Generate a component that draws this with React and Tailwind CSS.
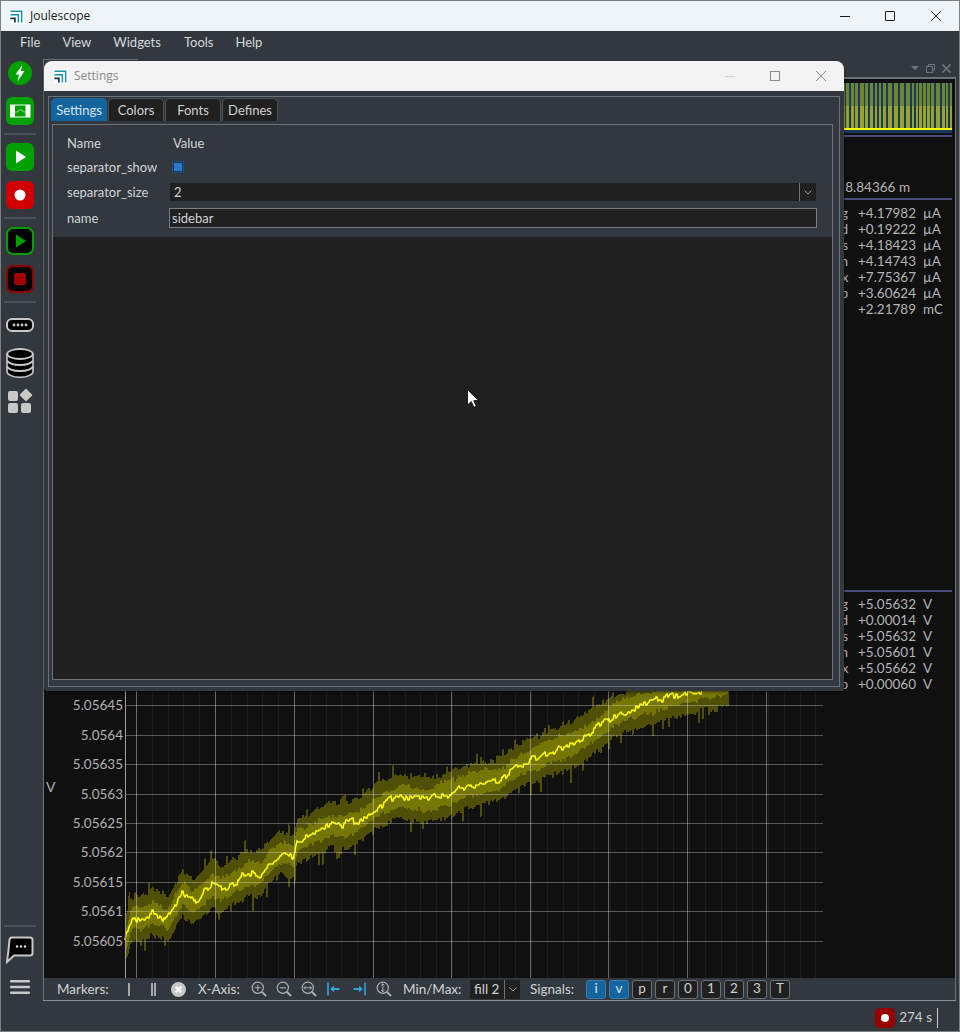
import React from "react";

function rng(seed) {
  let s = seed;
  return () => {
    s = (s * 1664525 + 1013904223) % 4294967296;
    return s / 4294967296;
  };
}

const MEAN = [[125,940],[127,935],[130,922],[135,917],[140,920],[152,912],[160,916],[167,920],[173,910],[182,893],[193,902],[200,895],[212,883],[220,889],[233,883],[248,873],[260,873],[270,862],[280,853],[293,857],[297,842],[310,835],[327,827],[345,825],[360,820],[375,808],[400,797],[430,800],[470,785],[500,780],[520,765],[545,755],[575,742],[595,730],[612,718],[640,705],[670,698],[700,690],[730,682]];

function meanAt(x) {
  for (let i = 1; i < MEAN.length; i++) {
    if (x <= MEAN[i][0]) {
      const [x0, y0] = MEAN[i - 1];
      const [x1, y1] = MEAN[i];
      return y0 + ((y1 - y0) * (x - x0)) / (x1 - x0);
    }
  }
  return 680;
}

function buildWave() {
  const r = rng(12345);
  const top = [], bot = [], itop = [], ibot = [], line = [];
  let nt = 0, nb = 0, it = 0, ib = 0, j = 0, slowT = 0, slowB = 0;
  for (let x = 125; x <= 728; x += 1) {
    const m = meanAt(x);
    if (x % 2 === 0) {
      j = j * 0.45 + (r() - 0.5) * 7;
      slowT = slowT * 0.85 + (r() - 0.5) * 2.5;
      slowB = slowB * 0.85 + (r() - 0.5) * 2.5;
      nt = r() * 5 + (r() < 0.14 ? r() * 11 : 0);
      nb = r() * 5 + (r() < 0.18 ? r() * 14 : 0);
      it = r() * 4 + slowT;
      ib = r() * 4 + slowB;
    }
    const y = m + j;
    top.push([x, Math.round(m - 20 - nt + slowT)]);
    bot.push([x, Math.round(m + 20 + nb + slowB)]);
    itop.push([x, Math.round(m - 9 - it)]);
    ibot.push([x, Math.round(m + 9 + ib)]);
    line.push([x, Math.round(y)]);
  }
  const step = (a) => a.map(([x, y]) => `${x},${y} ${x + 1},${y}`).join(" ");
  const stepR = (a) => [...a].reverse().map(([x, y]) => `${x + 1},${y} ${x},${y}`).join(" ");
  return {
    outer: step(top) + " " + stepR(bot),
    inner: step(itop) + " " + stepR(ibot),
    line: line.map(([x, y]) => `${x},${y}`).join(" "),
  };
}

const WAVE = buildWave();
const YLABELS = [
  ["5.05645", 705], ["5.0564", 735], ["5.05635", 764], ["5.0563", 794], ["5.05625", 823],
  ["5.0562", 852], ["5.05615", 882], ["5.0561", 911], ["5.05605", 941],
];
const VMAJOR = [136, 215, 294, 373, 451, 530, 608, 687, 766];

function Plot() {
  const minor = [];
  for (let x = 136; x < 824; x += 15.8) minor.push(Math.round(x));
  return (
    <svg viewBox="44 79 780 899" className="w-[780px] h-[899px] block shrink-0">
      <rect x="44" y="79" width="780" height="899" fill="#101010" />
      {minor.map((x) => (
        <line key={x} x1={x + 0.5} x2={x + 0.5} y1="79" y2="978" stroke="#1c1c1c" />
      ))}
      <polygon points={WAVE.outer} fill="#4f4f08" shapeRendering="crispEdges" />
      <polygon points={WAVE.inner} fill="#767604" shapeRendering="crispEdges" />
      <polyline points={WAVE.line} fill="none" stroke="#ffff00" strokeWidth="1.5" />
      {VMAJOR.map((x) => (
        <line key={x} x1={x + 0.5} x2={x + 0.5} y1="79" y2="978" stroke="#ffffff" strokeOpacity="0.36" />
      ))}
      {YLABELS.map(([t, y]) => (
        <line key={t} x1="125" x2="823" y1={y + 0.5} y2={y + 0.5} stroke="#ffffff" strokeOpacity="0.3" />
      ))}
      <line x1="125.5" x2="125.5" y1="79" y2="978" stroke="#a0a0a0" />
      {YLABELS.map(([t, y]) => (
        <text key={t} x="123" y={y + 5} textAnchor="end" fontSize="13.5" fill="#b0b0b0" fontFamily="Lato">{t}</text>
      ))}
      <text x="46" y="792" fontSize="14" fill="#b0b0b0" fontFamily="Lato">V</text>
    </svg>
  );
}

function Strip() {
  const r = rng(777);
  const bars = [];
  let x = 0;
  while (x < 128) {
    const w = 2 + Math.floor(r() * 3);
    bars.push([x, w]);
    x += w + 1 + Math.floor(r() * 2);
  }
  return (
    <svg viewBox="0 0 128 50" className="w-[128px] h-[50px] block">
      <rect width="128" height="50" fill="#17395f" />
      {bars.map(([bx, w]) => (
        <g key={bx}>
          <rect x={bx} y="0" width={w} height="23" fill="#6f8430" />
          <rect x={bx} y="23" width={w} height="22" fill="#99a22a" />
        </g>
      ))}
      <rect x="0" y="45" width="128" height="2" fill="#ffff00" />
    </svg>
  );
}

function Rows({ rows }) {
  return (
    <div className="flex flex-col">
      {rows.map(([l, v, u]) => (
        <div key={v + l} className="flex h-4 items-center leading-4">
          <span className="w-6 text-right">{l}</span>
          <span className="w-[65px] ml-[10px]">{v}</span>
          <span>{u}</span>
        </div>
      ))}
    </div>
  );
}

const Logo = ({ className }) => (
  <svg viewBox="0 0 16 16" className={className}>
    <rect width="16" height="16" rx="2" fill="#ffffff" />
    <path d="M1.5 2.5H13.5V14.5" fill="none" stroke="#1c8fb0" strokeWidth="1.6" />
    <path d="M1.5 6.2H10V14.5" fill="none" stroke="#1c8fb0" strokeWidth="1.6" />
    <path d="M1.5 10H6.3V14.5" fill="none" stroke="#12303f" strokeWidth="1.8" />
  </svg>
);

const SideSep = ({ className }) => <div className={`w-8 h-[2px] bg-[#4c5256] shrink-0 ${className}`} />;

const IconPlayBox = ({ dark, className }) => (
  <svg viewBox="0 0 28 28" className={`w-7 h-7 shrink-0 ${className}`}>
    <rect x={dark ? 1 : 0} y={dark ? 1 : 0} width={dark ? 26 : 28} height={dark ? 26 : 28} rx="6" fill={dark ? "#000000" : "#00a000"} stroke={dark ? "#00a000" : "none"} strokeWidth={dark ? 2 : 0} />
    <path d="M10 7.5L20 14L10 20.5Z" fill={dark ? "#00a000" : "#ffffff"} />
  </svg>
);

const IconRec = ({ className }) => (
  <svg viewBox="0 0 28 28" className={`w-7 h-7 shrink-0 ${className}`}>
    <rect width="28" height="28" rx="6" fill="#d00000" />
    <circle cx="14" cy="14" r="5.5" fill="#ffffff" />
  </svg>
);

const IconStop = ({ className }) => (
  <svg viewBox="0 0 28 28" className={`w-7 h-7 shrink-0 ${className}`}>
    <rect x="1" y="1" width="26" height="26" rx="6" fill="#000000" stroke="#900000" strokeWidth="2" />
    <rect x="8" y="8" width="12" height="12" rx="1.5" fill="#a00000" />
  </svg>
);

const IconMulti = ({ className }) => (
  <svg viewBox="0 0 28 28" className={`w-7 h-7 shrink-0 ${className}`}>
    <rect width="28" height="28" rx="6" fill="#00a000" />
    <rect x="4" y="7.5" width="5" height="13" fill="#ffffff" />
    <rect x="19.5" y="7.5" width="5" height="13" fill="#ffffff" />
    <path d="M9 8H19.5M9 20H19.5" stroke="#ffffff" strokeWidth="1" />
    <path d="M9 15H11.5L13 13H16L17.5 15H19.5" fill="none" stroke="#ffffff" strokeWidth="0.7" opacity="0.8" />
  </svg>
);

const IconDevice = ({ className }) => (
  <svg viewBox="0 0 28 14" className={`w-7 h-[14px] shrink-0 ${className}`}>
    <rect x="1" y="1" width="26" height="12" rx="5" fill="#000000" stroke="#c8c8c8" strokeWidth="2" />
    {[8, 12, 16, 20].map((x) => <circle key={x} cx={x} cy="7" r="1.4" fill="#c8c8c8" />)}
  </svg>
);

const IconDb = ({ className }) => (
  <svg viewBox="0 0 28 30" className={`w-7 h-[30px] shrink-0 ${className}`}>
    <path d="M1 6.5V23.5C1 26.8 7 29.3 14 29.3S27 26.8 27 23.5V6.5Z" fill="#000000" stroke="#c8c8c8" strokeWidth="1.6" />
    <ellipse cx="14" cy="6" rx="12.8" ry="5" fill="#000000" stroke="#c8c8c8" strokeWidth="1.8" />
    <path d="M1 12.5C3 16 8.5 17 14 17S25 16 27 12.5" fill="none" stroke="#c8c8c8" strokeWidth="2" />
    <path d="M1 18.5C3 22 8.5 23 14 23S25 22 27 18.5" fill="none" stroke="#c8c8c8" strokeWidth="2" />
  </svg>
);

const IconWidgets = ({ className }) => (
  <svg viewBox="0 0 26 26" className={`w-[26px] h-[26px] shrink-0 ${className}`}>
    <rect x="1" y="3" width="10" height="10" rx="2" fill="#c8c8c8" />
    <rect x="1" y="15" width="10" height="10" rx="2" fill="#c8c8c8" />
    <rect x="14" y="15" width="10" height="10" rx="2" fill="#c8c8c8" />
    <path d="M19 0.5L25 6.5a1 1 0 0 1 0 1.2L19 13.5L13 7.5a1 1 0 0 1 0-1.2Z" fill="#c8c8c8" />
  </svg>
);

const IconChat = ({ className }) => (
  <svg viewBox="0 0 28 28" className={`w-7 h-7 shrink-0 ${className}`}>
    <path d="M6 1.5H24A2.5 2.5 0 0 1 26.5 4V17A2.5 2.5 0 0 1 24 19.5H8L1 26Q2.5 15 3.5 4A2.5 2.5 0 0 1 6 1.5Z" fill="#000000" stroke="#c8c8c8" strokeWidth="2" />
    {[11, 15, 19].map((x) => <circle key={x} cx={x} cy="10.5" r="1.2" fill="#e0e0e0" />)}
  </svg>
);

const IconMenu = ({ className }) => (
  <svg viewBox="0 0 20 14" className={`w-5 h-[14px] shrink-0 ${className}`}>
    <rect y="0" width="20" height="2.5" rx="1" fill="#c8c8c8" />
    <rect y="5.7" width="20" height="2.5" rx="1" fill="#c8c8c8" />
    <rect y="11.4" width="20" height="2.5" rx="1" fill="#c8c8c8" />
  </svg>
);

const Mag = ({ children }) => (
  <svg viewBox="0 0 16 16" className="w-4 h-4">
    <circle cx="6.8" cy="6.8" r="5.6" fill="none" stroke="#b0b0b0" strokeWidth="1.2" />
    <path d="M11 11L15 15" stroke="#b0b0b0" strokeWidth="1.8" />
    {children}
  </svg>
);

const Box = ({ children }) => <div className="w-[25px] flex items-center justify-center shrink-0">{children}</div>;

function Toolbar() {
  return (
    <div className="h-[22px] flex items-center bg-[#32383d] pl-[13px] text-[13.5px] text-[#cfd3d7] shrink-0">
      <span className="w-[59px] shrink-0">Markers:</span>
      <Box><div className="w-[2px] h-[13px] bg-[#a8a8a8]" /></Box>
      <Box><div className="w-[5px] h-[13px] border-x-2 border-[#a8a8a8]" /></Box>
      <Box>
        <svg viewBox="0 0 15 15" className="w-[15px] h-[15px]">
          <circle cx="7.5" cy="7.5" r="7.5" fill="#c8c8c8" />
          <path d="M4.8 4.8L10.2 10.2M10.2 4.8L4.8 10.2" stroke="#ffffff" strokeWidth="2.2" />
        </svg>
      </Box>
      <span className="ml-[7px] w-[48px] shrink-0">X-Axis:</span>
      <Box><Mag><path d="M3.8 6.8H9.8M6.8 3.8V9.8" stroke="#b0b0b0" strokeWidth="1.1" /></Mag></Box>
      <Box><Mag><path d="M3.8 6.8H9.8" stroke="#b0b0b0" strokeWidth="1.1" /></Mag></Box>
      <Box><Mag><path d="M3 6.8H10.6M4.6 5.2L3 6.8L4.6 8.4M9 5.2L10.6 6.8L9 8.4" fill="none" stroke="#b0b0b0" strokeWidth="1" /></Mag></Box>
      <Box>
        <svg viewBox="0 0 14 14" className="w-[14px] h-[14px]">
          <path d="M1 0.5V13.5" stroke="#35a2e0" strokeWidth="1.6" />
          <path d="M3 7L7 3.8V6H12.5V8H7V10.2Z" fill="#35a2e0" />
        </svg>
      </Box>
      <Box>
        <svg viewBox="0 0 14 14" className="w-[14px] h-[14px]">
          <path d="M13 0.5V13.5" stroke="#35a2e0" strokeWidth="1.6" />
          <path d="M11 7L7 3.8V6H1.5V8H7V10.2Z" fill="#35a2e0" />
        </svg>
      </Box>
      <Box><Mag><path d="M6.8 2.8V10.8M5.2 4.4L6.8 2.8L8.4 4.4M5.2 9.2L6.8 10.8L8.4 9.2" fill="none" stroke="#b0b0b0" strokeWidth="1" /></Mag></Box>
      <span className="ml-[7px] w-[67px] shrink-0">Min/Max:</span>
      <div className="w-[50px] h-[19px] bg-[#202020] flex items-center shrink-0">
        <span className="w-[34px] pl-1 leading-5">fill 2</span>
        <div className="w-[1px] h-[19px] bg-[#6b7278]" />
        <svg viewBox="0 0 10 10" className="w-[10px] h-[10px] ml-[3px]">
          <path d="M1.5 3.5L5 7L8.5 3.5" fill="none" stroke="#9a9a9a" strokeWidth="1" />
        </svg>
      </div>
      <span className="ml-[10px] w-[56px] shrink-0">Signals:</span>
      <div className="flex gap-[3px]">
        {["i", "v", "p", "r", "0", "1", "2", "3", "T"].map((t, i) => (
          <div
            key={t}
            className={`w-5 h-[19px] rounded-[3px] border flex items-center justify-center leading-none ${i < 2 ? "bg-[#1464a0] border-[#3a7cb0] text-[#d8e4ee]" : "bg-[#202020] border-[#6b7278] text-[#d0d0d0]"}`}
          >
            {t}
          </div>
        ))}
      </div>
    </div>
  );
}

function Dialog() {
  const tabs = ["Settings", "Colors", "Fonts", "Defines"];
  return (
    <div className="absolute left-[43px] top-[60px] w-[800px] h-[630px] flex flex-col rounded-t-lg rounded-b-sm overflow-hidden bg-[#32383d] shadow-[0_1px_3px_rgba(0,0,0,0.5)]">
      <div className="h-[30px] bg-[#f3f3f3] flex items-center shrink-0 font-['Open_Sans']">
        <Logo className="w-[15px] h-[15px] ml-[9px]" />
        <span className="ml-[6px] text-[12px] text-[#8a8a8a]">Settings</span>
        <div className="flex-1" />
        <div className="w-[10px] h-[1px] bg-[#d0d0d0] mr-[35px]" />
        <div className="w-[10px] h-[10px] border border-[#8a8a8a] mr-[35px]" />
        <svg viewBox="0 0 12 12" className="w-3 h-3 mr-[17px]">
          <path d="M1 1L11 11M11 1L1 11" stroke="#8a8a8a" strokeWidth="1" />
        </svg>
      </div>
      <div className="flex-1 flex flex-col mt-[5px] mb-[4px] ml-[4px] mr-[4px] border border-[#6b7278]">
        <div className="flex h-[23px] mt-[1px] ml-[2px] gap-[1px] shrink-0">
          {tabs.map((t, i) => (
            <div
              key={t}
              className={`w-[56px] rounded-t-[5px] pt-[2px] flex items-center justify-center text-[13px] border-x border-t ${i === 0 ? "bg-[#1464a0] border-[#1464a0] text-[#d6e4ef]" : "bg-[#202020] border-[#4a4f54] text-[#d0d0d0]"}`}
            >
              {t}
            </div>
          ))}
        </div>
        <div className="flex-1 flex flex-col mt-[3px] ml-[3px] mr-[6px] mb-[6px] border border-[#6b7278] bg-[#202020]">
          <div className="h-[112px] bg-[#32383d] pl-[14px] pr-[15px] pt-[9px] text-[13px] text-[#d0d4d8] shrink-0">
            <div className="flex h-[18px] items-center pt-[2px]">
              <span className="w-[106px]">Name</span>
              <span>Value</span>
            </div>
            <div className="flex h-[18px] items-center mt-[6px]">
              <span className="w-[105px] pt-[2px]">separator_show</span>
              <div className="w-3 h-3 border border-[#1a4f86] bg-[#1a3a5c] flex items-center justify-center">
                <div className="w-2 h-2 bg-[#2f78c8]" />
              </div>
            </div>
            <div className="flex h-[18px] items-center mt-[7px]">
              <span className="w-[103px] pt-[2px]">separator_size</span>
              <div className="flex-1 h-[18px] mr-px bg-[#202020] flex items-center">
                <span className="flex-1 pl-1 pt-[2px]">2</span>
                <div className="w-px h-[18px] bg-[#6b7278]" />
                <svg viewBox="0 0 10 10" className="w-[10px] h-[10px] mx-[3px]">
                  <path d="M1.5 3.5L5 7L8.5 3.5" fill="none" stroke="#9a9a9a" strokeWidth="1" />
                </svg>
              </div>
            </div>
            <div className="flex h-5 items-center mt-[7px]">
              <span className="w-[102px] pt-[2px]">name</span>
              <div className="flex-1 h-5 bg-[#202020] border border-[#7a8086] flex items-center pl-[2px] pt-[2px]">sidebar</div>
            </div>
          </div>
        </div>
      </div>
    </div>
  );
}

export default function App() {
  return (
    <div className="relative w-[960px] h-[1032px] flex flex-col border border-[#7f7f7f] bg-[#32383d] font-['Lato',sans-serif] overflow-hidden">
      <div className="h-[30px] bg-[#eff4f8] flex items-center shrink-0 font-['Open_Sans',sans-serif]">
        <Logo className="w-[15px] h-[15px] ml-[8px]" />
        <span className="ml-[6px] text-[12px] text-[#1a1a1a]">Joulescope</span>
        <div className="flex-1" />
        <div className="w-[10px] h-[1px] bg-[#1a1a1a] mr-[35px]" />
        <div className="w-[10px] h-[10px] border border-[#1a1a1a] rounded-[1px] mr-[35px]" />
        <svg viewBox="0 0 12 12" className="w-3 h-3 mr-[17px]">
          <path d="M1 1L11 11M11 1L1 11" stroke="#1a1a1a" strokeWidth="1" />
        </svg>
      </div>
      <div className="h-[24px] flex items-center shrink-0 text-[13px] text-[#d2d8de]">
        <span className="ml-[19px]">File</span>
        <span className="ml-[22px]">View</span>
        <span className="ml-[22px]">Widgets</span>
        <span className="ml-[23px]">Tools</span>
        <span className="ml-[22px]">Help</span>
      </div>
      <div className="flex-1 flex min-h-0">
        <div className="w-[42px] flex flex-col items-center shrink-0 pr-[4px]">
          <svg viewBox="0 0 24 24" className="w-6 h-6 mt-[6px] shrink-0">
            <circle cx="12" cy="12" r="12" fill="#00a000" />
            <path d="M14.5 3.5L7.5 13.5H11L9.5 20.5L16.5 10H12.8Z" fill="#ffffff" />
          </svg>
          <IconMulti className="mt-[12px]" />
          <SideSep className="mt-[8px]" />
          <IconPlayBox className="mt-[8px]" />
          <IconRec className="mt-[10px]" />
          <SideSep className="mt-[8px]" />
          <IconPlayBox dark className="mt-[8px]" />
          <IconStop className="mt-[10px]" />
          <SideSep className="mt-[8px]" />
          <IconDevice className="mt-[15px]" />
          <IconDb className="mt-[16px]" />
          <IconWidgets className="mt-[10px]" />
          <div className="flex-1" />
          <SideSep />
          <IconChat className="mt-[9px]" />
          <IconMenu className="mt-[16px] mb-[7px]" />
        </div>
        <div className="w-[913px] flex flex-col shrink-0">
          <div className="h-[22px] pt-[4px] flex shrink-0 items-stretch">
            <div className="w-[95px] border-t border-l border-[#6b7278]" />
            <div className="flex-1 flex items-center justify-end pr-[5px]">
              <svg viewBox="0 0 8 5" className="w-2 h-[5px] mr-[7px]"><path d="M0 0H8L4 4.5Z" fill="#6c7278" /></svg>
              <svg viewBox="0 0 9 9" className="w-[9px] h-[9px] mr-[7px]">
                <rect x="2.5" y="0.5" width="6" height="5.5" fill="none" stroke="#6c7278" />
                <rect x="0.5" y="2.5" width="6" height="6" fill="#32383d" stroke="#6c7278" />
              </svg>
              <svg viewBox="0 0 9 9" className="w-[9px] h-[9px]"><path d="M0.5 0.5L8.5 8.5M8.5 0.5L0.5 8.5" stroke="#6c7278" strokeWidth="1.6" /></svg>
            </div>
          </div>
          <div className="flex-1 flex flex-col border-x border-[#6b7278] border-t-2 min-h-0">
            <div className="flex-1 flex bg-[#101010] min-h-0 overflow-hidden">
              <Plot />
              <div className="w-[131px] shrink-0 flex flex-col pt-[4px] pr-[3px] text-[13.5px] text-[#b4b4b4]">
                <Strip />
                <div className="h-[2px] mt-[2px] bg-[#4a4a78]" />
                <div className="mt-[42px] h-4 leading-4 text-right pr-[42px]">8.84366 m</div>
                <div className="h-[2px] mt-[3px] bg-[#4a4a78]" />
                <div className="mt-[5px]">
                  <Rows rows={[["avg","+4.17982","µA"],["std","+0.19222","µA"],["rms","+4.18423","µA"],["min","+4.14743","µA"],["max","+7.75367","µA"],["p2p","+3.60624","µA"],["","+2.21789","mC"]]} />
                </div>
                <div className="h-[2px] mt-[273px] bg-[#4a4a78]" />
                <div className="mt-[4px]">
                  <Rows rows={[["avg","+5.05632","V"],["std","+0.00014","V"],["rms","+5.05632 ","V"],["min","+5.05601","V"],["max","+5.05662","V"],["p2p","+0.00060","V"]]} />
                </div>
              </div>
            </div>
            <Toolbar />
          </div>
          <div className="h-px bg-[#8a9096] shrink-0" />
        </div>
      </div>
      <div className="h-[30px] flex items-center justify-end shrink-0 text-[13.5px] text-[#c8ccd0] pr-[21px]">
        <svg viewBox="0 0 20 20" className="w-5 h-5 mt-[3px]">
          <rect width="20" height="20" rx="5" fill="#990000" />
          <circle cx="10" cy="10" r="4" fill="#ffffff" />
        </svg>
        <span className="ml-[4px] mt-[3px]">274 s</span>
        <div className="ml-[5px] w-px h-5 mt-[3px] bg-[#c8ccd0]" />
      </div>
      <Dialog />
      <svg viewBox="0 0 12 19" className="absolute left-[466px] top-[388px] w-3 h-[19px]">
        <path d="M0.5 0.5V16L4.3 12.6L6.8 18.3L9.3 17.2L6.8 11.6H11.5Z" fill="#ffffff" stroke="#000000" strokeWidth="0.8" />
      </svg>
    </div>
  );
}
